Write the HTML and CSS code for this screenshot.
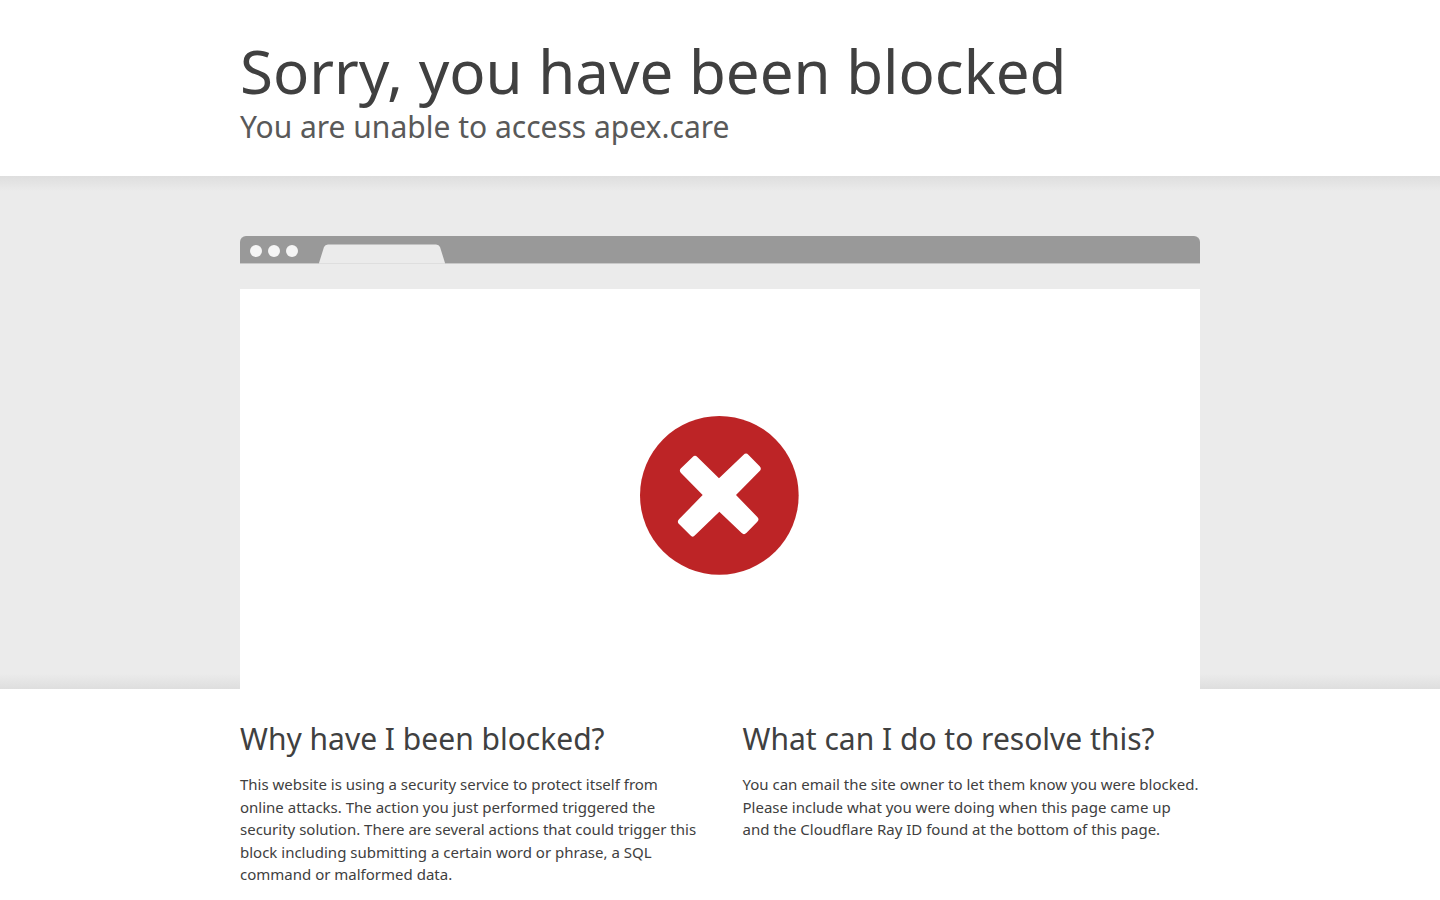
FILE: index.html
```html
<!DOCTYPE html>
<html lang="en">
<head>
    <meta charset="UTF-8">
    <meta name="viewport" content="width=device-width, initial-scale=1.0">
    <title>Sorry, you have been blocked</title>
    <link rel="stylesheet" href="styles.css">
</head>
<body>
    <header class="wrapper header">
        <h1>Sorry, you have been blocked</h1>
        <h2 class="subheadline">You are unable to access apex.care</h2>
    </header>

    <section class="highlight">
        <div class="wrapper">
            <!-- browser window -->
            <div class="browser">
                <div class="browser-bar">
                    <span class="dot"></span>
                    <span class="dot"></span>
                    <span class="dot"></span>
                    <svg class="tab" viewBox="0 0 128 20" aria-hidden="true">
                        <path d="M0 19 L5 3 Q6 0.5 9 0.5 H117 Q120 0.5 121 3 L126 19 Z" fill="#ebebeb"/>
                        <path d="M0 19 H126 V20 H0 Z" fill="#dedede"/>
                    </svg>
                </div>
                <div class="screen">
                    <svg class="icon-error" viewBox="30 30 480 480" role="img" aria-label="Blocked">
                        <circle cx="268" cy="268" r="238" fill="#bd2426"/>
                        <path fill="#fff" d="M188 153 Q195 146 202 153 L267 217 L340 147 Q348 139 355 146 L389 181 Q396 188 389 195 L318 267 L382 333 Q389 340 382 347 L349 381 Q342 388 335 381 L268 317 L195 388 Q188 396 181 388 L147 354 Q140 347 147 340 L218 267 L153 201 Q146 193 153 187 Z"/>
                    </svg>
                </div>
            </div>
        </div>
    </section>

    <main class="wrapper columns">
        <section>
            <h2>Why have I been blocked?</h2>
            <p>This website is using a security service to protect itself from online attacks. The action you just performed triggered the security solution. There are several actions that could trigger this block including submitting a certain word or phrase, a SQL command or malformed data.</p>
        </section>
        <section>
            <h2>What can I do to resolve this?</h2>
            <p>You can email the site owner to let them know you were blocked. Please include what you were doing when this page came up and the Cloudflare Ray ID found at the bottom of this page.</p>
        </section>
    </main>
</body>
</html>
```
FILE: styles.css
```css
* {
    margin: 0;
    padding: 0;
    box-sizing: border-box;
}
body {
    font-family: "Noto Sans", Arial, sans-serif;
    font-size: 15px;
    line-height: 1.5;
    color: #404040;
    background-color: #fff;
}
.wrapper {
    width: 90%;
    max-width: 960px;
    margin: 0 auto;
}
h1 {
    font-size: 60px;
    font-weight: 400;
    line-height: 1.2;
}
h2 {
    font-size: 30px;
    font-weight: 400;
    line-height: 1.3;
}
.header {
    padding: 35px 0 30px;
}
.header .subheadline {
    color: #595959;
}
/* grey band, darker along the top and bottom edges */
.highlight {
    padding-top: 60px;
    background-color: #ebebeb;
    background-image: linear-gradient(to bottom, #dedede, #ebebeb 3%, #ebebeb 97%, #dedede);
}
.browser-bar {
    display: flex;
    align-items: center;
    gap: 6px;
    height: 28px;
    padding: 0 10px;
    background-color: #999;
    box-shadow: inset 0 -1px #c8c8c8;
    border-radius: 6px 6px 0 0;
}
.dot {
    width: 12px;
    height: 12px;
    margin-top: 2px;
    border-radius: 50%;
    background-color: #f5f5f5;
}
.tab {
    align-self: flex-end;
    width: 128px;
    height: 20px;
    margin-left: 15px;
}
.screen {
    display: flex;
    justify-content: center;
    margin-top: 25px;
    padding: 127px 0 113px;
    background-color: #fff;
}
.icon-error {
    width: 160px;
    height: 160px;
}
.columns {
    display: grid;
    grid-template-columns: 1fr 1fr;
    gap: 45px;
    padding: 30px 0;
}
.columns p {
    margin-top: 15px;
}
@media (max-width: 720px) {
    .columns {
        grid-template-columns: 1fr;
    }
}
```
